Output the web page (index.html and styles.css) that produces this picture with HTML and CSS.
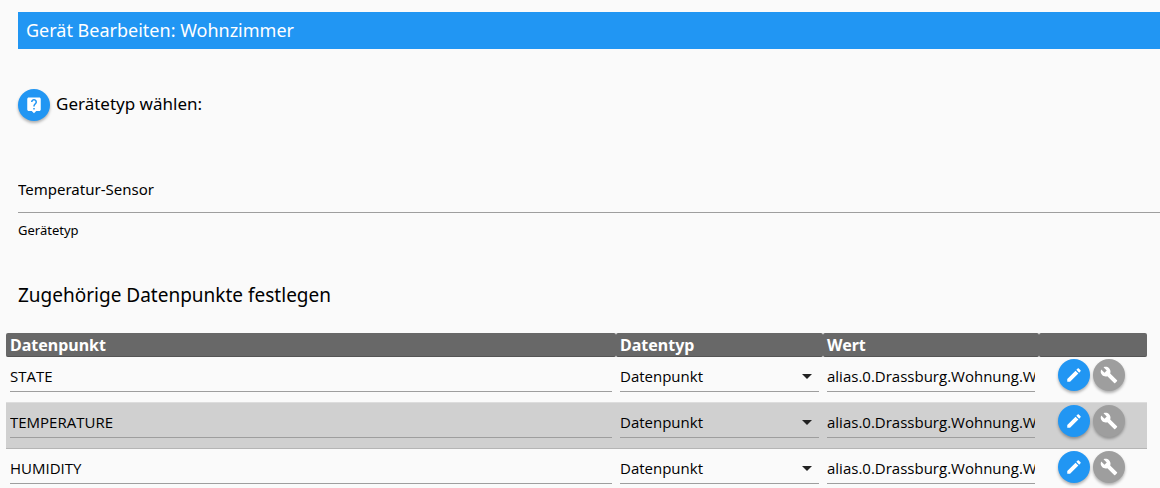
FILE: index.html
```html
<!DOCTYPE html>
<html lang="de">
<head>
<meta charset="utf-8">
<title>Gerät Bearbeiten</title>
<link rel="stylesheet" href="styles.css">
</head>
<body>
<svg class="sprite" aria-hidden="true">
  <symbol id="help" viewBox="0 0 24 24"><path fill-rule="evenodd" d="M19 2H5c-1.100 0-2 .9-2 2v14c0 1.100.9 2 2 2h4l3 3 3-3h4c1.100 0 2-.9 2-2V4c0-1.100-.9-2-2-2zm-6 16h-2v-2h2v2zm2.070-7.750l-.9.920C13.450 11.900 13 12.500 13 14h-2v-.5c0-1.100.45-2.100 1.170-2.830l1.240-1.260c.37-.36.59-.86.59-1.410 0-1.100-.9-2-2-2s-2 .9-2 2H8c0-2.210 1.790-4 4-4s4 1.790 4 4c0 .88-.36 1.680-.93 2.250z"/></symbol>
  <symbol id="edit" viewBox="0 0 24 24"><path d="M3 17.250V21h3.750L17.810 9.940l-3.750-3.750L3 17.250zM20.710 7.040c.39-.39.39-1.020 0-1.410l-2.340-2.340c-.39-.39-1.020-.39-1.410 0l-1.830 1.830 3.750 3.750 1.830-1.830z"/></symbol>
  <symbol id="build" viewBox="0 0 24 24"><path d="M22.700 19l-9.100-9.100c.9-2.300.4-5-1.500-6.900-2-2-5-2.400-7.400-1.300L9 6 6 9 1.600 4.700C.4 7.100.9 10.100 2.900 12.100c1.900 1.900 4.600 2.400 6.900 1.500l9.100 9.100c.4.400 1 .4 1.400 0l2.300-2.300c.5-.4.5-1.100.1-1.400z"/></symbol>
</svg>
<header class="title-bar"><h1>Gerät Bearbeiten: Wohnzimmer</h1></header>
<main>
  <div class="type-heading">
    <button class="round" type="button" aria-label="Hilfe"><svg><use href="#help"/></svg></button>
    <h2>Gerätetyp wählen:</h2>
  </div>
  <div class="type-field">
    <select id="type"><option>Temperatur-Sensor</option></select>
    <label for="type">Gerätetyp</label>
  </div>
  <h2 class="section-title">Zugehörige Datenpunkte festlegen</h2>
  <table class="points">
    <colgroup><col><col class="col-type"><col class="col-value"><col class="col-actions"></colgroup>
    <thead><tr><th>Datenpunkt</th><th>Datentyp</th><th>Wert</th><td></td></tr></thead>
    <tbody>
      <tr>
        <td><input class="field" aria-label="Datenpunkt" value="STATE"></td>
        <td><div class="select"><select class="field" aria-label="Datentyp"><option>Datenpunkt</option></select></div></td>
        <td><input class="field" aria-label="Wert" value="alias.0.Drassburg.Wohnung.Wohnzimmer"></td>
        <td><div class="actions"><button class="round" type="button" aria-label="Bearbeiten"><svg><use href="#edit"/></svg></button><button class="round muted" type="button" aria-label="Einstellungen"><svg><use href="#build"/></svg></button></div></td>
      </tr>
      <tr>
        <td><input class="field" aria-label="Datenpunkt" value="TEMPERATURE"></td>
        <td><div class="select"><select class="field" aria-label="Datentyp"><option>Datenpunkt</option></select></div></td>
        <td><input class="field" aria-label="Wert" value="alias.0.Drassburg.Wohnung.Wohnzimmer"></td>
        <td><div class="actions"><button class="round" type="button" aria-label="Bearbeiten"><svg><use href="#edit"/></svg></button><button class="round muted" type="button" aria-label="Einstellungen"><svg><use href="#build"/></svg></button></div></td>
      </tr>
      <tr>
        <td><input class="field" aria-label="Datenpunkt" value="HUMIDITY"></td>
        <td><div class="select"><select class="field" aria-label="Datentyp"><option>Datenpunkt</option></select></div></td>
        <td><input class="field" aria-label="Wert" value="alias.0.Drassburg.Wohnung.Wohnzimmer"></td>
        <td><div class="actions"><button class="round" type="button" aria-label="Bearbeiten"><svg><use href="#edit"/></svg></button><button class="round muted" type="button" aria-label="Einstellungen"><svg><use href="#build"/></svg></button></div></td>
      </tr>
    </tbody>
  </table>
</main>
</body>
</html>
```
FILE: styles.css
```css
* { box-sizing: border-box; }
html { overflow: hidden; }
body {
  margin: 0;
  padding-top: 12px;
  background: #fafafa;
  color: #000;
  font-family: "Noto Sans", "Open Sans", sans-serif;
}
h1, h2 { margin: 0; font-weight: 400; }
.sprite { display: none; }

.title-bar {
  margin-left: 18px;
  padding: 6px 8px 7px;
  background: #2196f3;
  color: #fff;
}
.title-bar h1 { font-size: 18px; line-height: 24px; }

.type-heading {
  display: flex;
  align-items: center;
  gap: 6px;
  margin: 40px 0 0 18px;
}
.type-heading h2 { font-size: 17px; line-height: 28px; padding-bottom: 2px; }

.round {
  display: grid;
  place-items: center;
  width: 32px;
  height: 32px;
  padding: 0;
  border: 0;
  border-radius: 50%;
  background: #2196f3;
  color: #fff;
  box-shadow: 0 2px 3px rgba(0, 0, 0, .3);
}
.round svg { width: 18px; height: 18px; fill: currentColor; }
.muted { background: #9e9e9e; }

.type-field { margin: 46px 0 0 18px; }
.type-field select {
  display: block;
  appearance: none;
  width: 100%;
  height: 46px;
  padding: 0 0 2px;
  border: 0;
  border-bottom: 1px solid #9e9e9e;
  border-radius: 0;
  background: none;
  color: #000;
  font: 15px "Noto Sans", sans-serif;
}
.type-field label { display: block; padding-top: 8px; font-size: 13px; line-height: 18px; }

.section-title { margin: 43px 0 0 18px; font-size: 19px; line-height: 26px; }

.points {
  table-layout: fixed;
  width: calc(100% - 19px);
  margin: 25px 13px 0 6px;
  border-collapse: separate;
  border-spacing: 0;
}
.col-type { width: 207px; }
.col-value { width: 216px; }
.col-actions { width: 108px; }
.points thead th, .points thead td {
  height: 24px;
  padding: 0 4px;
  border-bottom: 1px solid #555;
  border-radius: 2px;
  background: #686868;
  color: #fff;
  font-size: 16px;
  line-height: 22px;
  text-align: left;
}
.points tbody td {
  height: 46px;
  padding: 0 4px 10px;
  border-bottom: 1px solid #ddd;
  vertical-align: bottom;
}
.points tbody tr:nth-child(even) td {
  border-bottom-color: #b5b5b5;
  background: #d0d0d0;
}
.points tbody td:last-child { padding: 0 4px 11px 19px; }

.field {
  display: block;
  appearance: none;
  width: 100%;
  height: 30px;
  padding: 0 0 2px;
  border: 0;
  border-bottom: 1px solid #9e9e9e;
  border-radius: 0;
  background: transparent;
  color: #000;
  font: 15px "Open Sans", sans-serif;
}
.select { position: relative; }
.select::after {
  content: "";
  position: absolute;
  top: 12px;
  right: 7px;
  width: 10px;
  height: 5px;
  background: #222;
  clip-path: polygon(0 0, 100% 0, 50% 100%);
  pointer-events: none;
}
.actions { display: flex; gap: 3px; }
```
